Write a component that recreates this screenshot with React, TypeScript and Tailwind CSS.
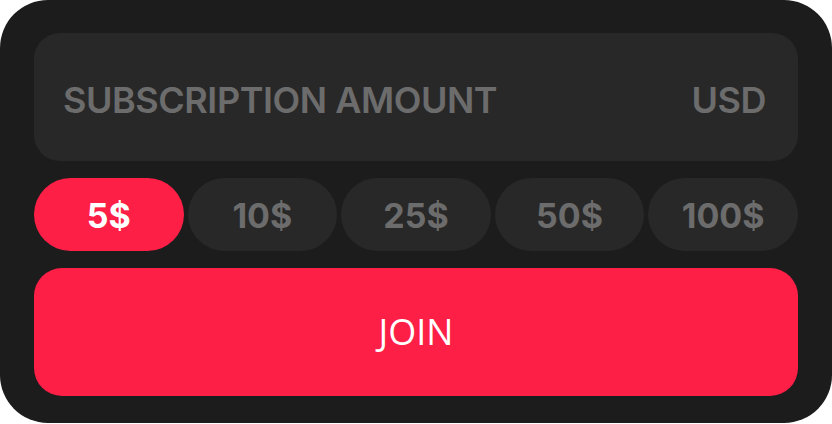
import React from 'react'

const amounts = ['5$', '10$', '25$', '50$', '100$']

export default function App() {
  const selected = 0
  return (
    <div className="w-[832px] h-[424px] bg-white">
      <div className="w-full h-[423px] bg-[#1c1c1c] rounded-[48px] px-[34px] pt-[33px] flex flex-col gap-[17px]">
        <div className="h-[128px] rounded-[26px] bg-[#282828] flex items-center justify-between pl-[29px] pr-[32px] pt-[6px] font-['Inter',sans-serif] font-semibold text-[36px] text-[#6c6c6c] tracking-[-0.45px]">
          <span>SUBSCRIPTION AMOUNT</span>
          <span>USD</span>
        </div>
        <div className="flex gap-[4px] h-[73px]">
          {amounts.map((a, i) => (
            <button
              key={a}
              className={
                'flex-1 rounded-full flex items-center justify-center pt-[2px] font-[\'Inter\',sans-serif] font-bold text-[34px] ' +
                (i === selected ? 'bg-[#fe1f47] text-white' : 'bg-[#282828] text-[#6c6c6c]')
              }
            >
              {a}
            </button>
          ))}
        </div>
        <button className="h-[128px] rounded-[28px] bg-[#fe1f47] text-white flex items-center justify-center font-['Open_Sans',sans-serif] text-[36px]">
          JOIN
        </button>
      </div>
    </div>
  )
}
